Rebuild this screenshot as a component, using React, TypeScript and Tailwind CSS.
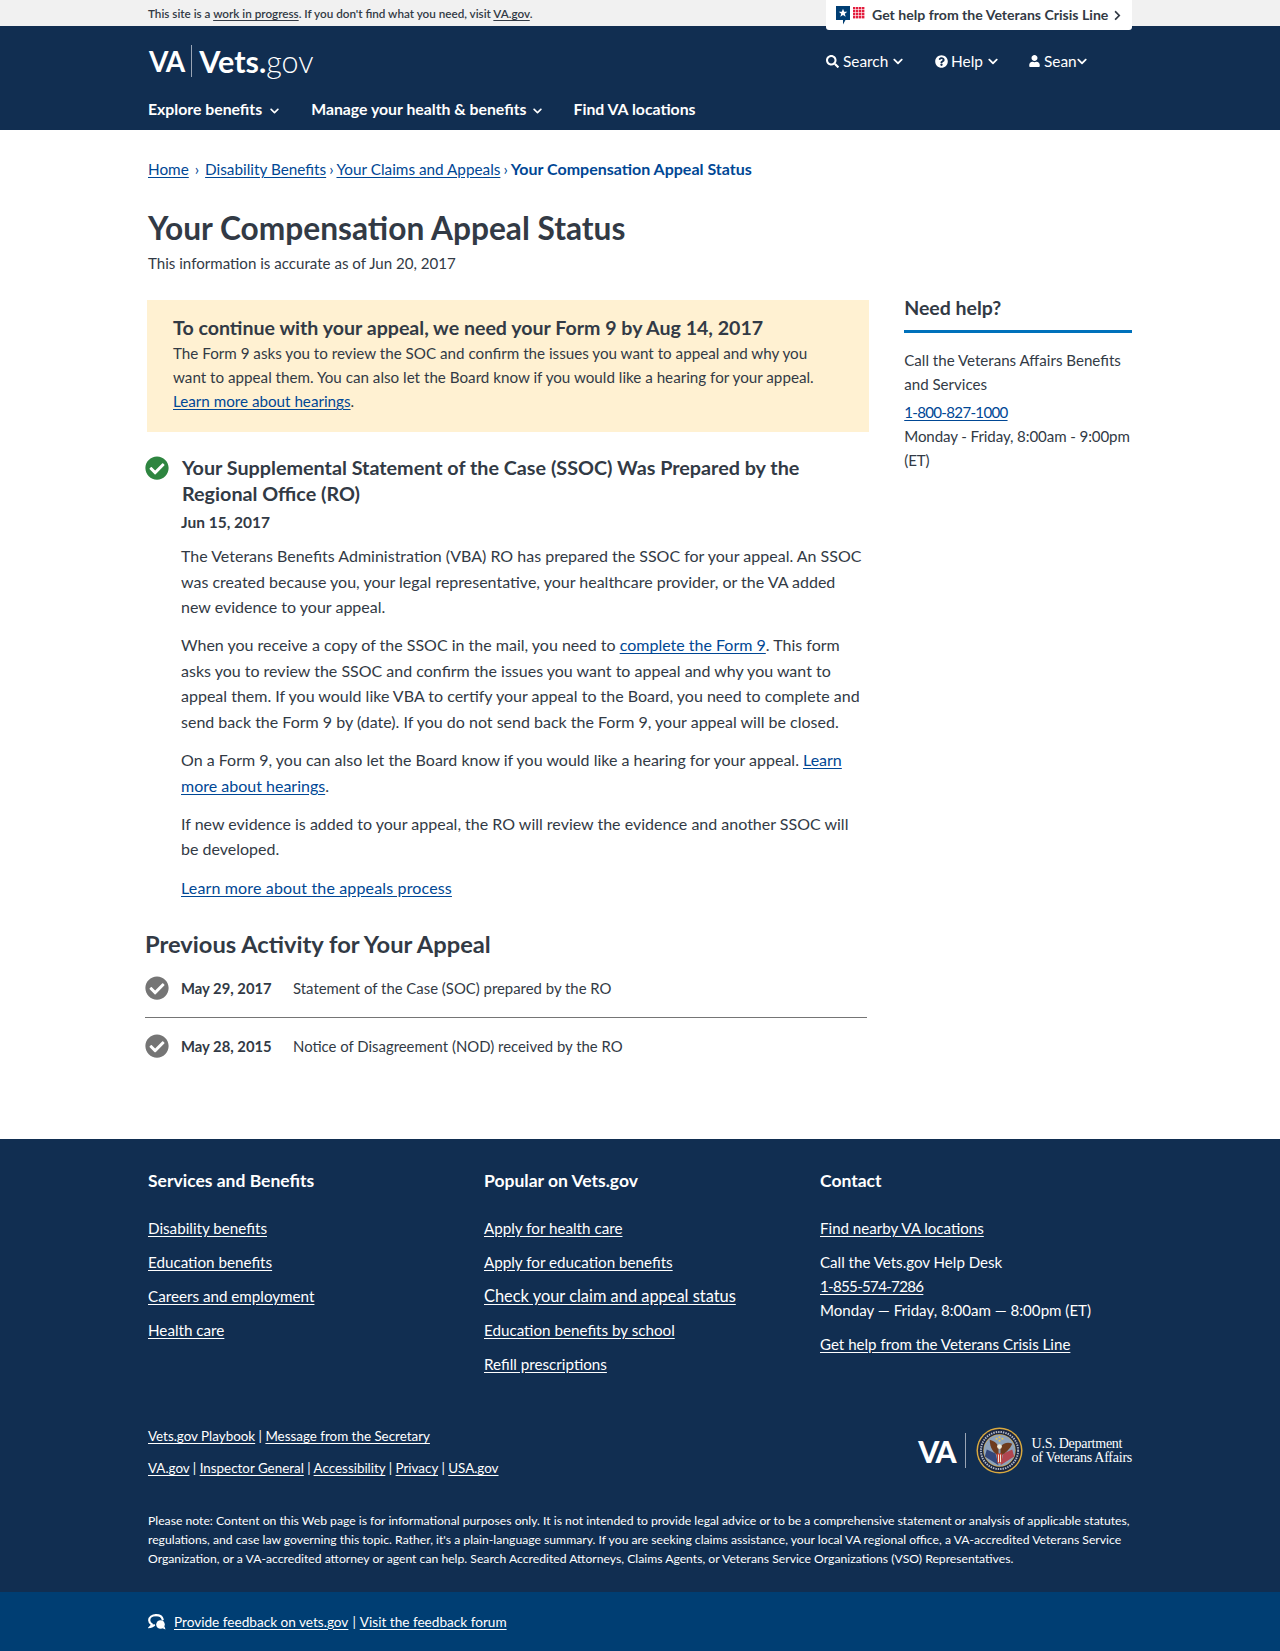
import { FaCheckCircle, FaChevronDown, FaChevronRight, FaQuestionCircle, FaSearch, FaUser } from 'react-icons/fa'

const link = 'underline underline-offset-2 text-[#004795]'
const foot = 'underline underline-offset-2 text-white'

function CrisisIcon() {
	const dots = []
	for (let y = 0; y < 4; y++) {
		for (let x = 0; x < 4; x++) {
			dots.push(<rect key={`${x}-${y}`} x={17 + x * 3} y={1 + y * 3} width="2.400" height="2.400" fill="#e31c3d" />)
		}
	}
	return (
		<svg width="29" height="19" viewBox="0 0 29 19" className="shrink-0">
			<path d="M0 0h14v14H9.5L7 18.5V14H0z" fill="#003e73" />
			<path d="M7 2.8l1.2 3h3.1L8.8 7.7l.9 3.1L7 9l-2.700 1.800.9-3.100L2.700 5.800h3.100z" fill="#fff" />
			{dots}
		</svg>
	)
}

function Seal() {
	return (
		<svg width="47" height="47" viewBox="0 0 48 48" className="shrink-0">
			<circle cx="24" cy="24" r="23.500" fill="#d9a93f" />
			<circle cx="24" cy="24" r="22" fill="#1a2540" />
			<circle cx="24" cy="24" r="19" fill="none" stroke="#aeb6c4" strokeWidth="2" strokeDasharray="1.500 1" />
			<circle cx="24" cy="24" r="16.500" fill="#d9a93f" />
			<circle cx="24" cy="24" r="16" fill="#8ea3bb" />
			<path d="M9 30 L23 39 L20 27 L11 23z" fill="#34477a" />
			<path d="M39 30 L25 39 L28 27 L37 23z" fill="#b24650" />
			<path d="M23 29 C18 27 14 21 14 13 C18 14 21 16 23 20z" fill="#6e3b1e" />
			<path d="M25 29 C30 27 35 22 37 17 C33 15 28 16 25 20z" fill="#6e3b1e" />
			<circle cx="24" cy="20" r="2.500" fill="#efe9d8" />
			<path d="M21 27h6l-1 10h-4z" fill="#c0392b" />
			<path d="M22.500 28h1v8h-1zM24.500 28h1v8h-1z" fill="#f2efe6" />
			<circle cx="21" cy="12" r="1.100" fill="#e8c24f" />
			<circle cx="24" cy="10.500" r="1.100" fill="#e8c24f" />
			<circle cx="27" cy="12" r="1.100" fill="#e8c24f" />
			<circle cx="24" cy="14" r="1.100" fill="#e8c24f" />
		</svg>
	)
}

function FeedbackIcon() {
	return (
		<svg width="18" height="16" viewBox="0 0 18 16" className="shrink-0 mr-[8px]">
			<path d="M8 1.200C4.100 1.200 1.200 3.400 1.200 6.300c0 1.700 1 3.100 2.600 4.100-.2 1-.7 1.800-1.400 2.500 1.400-.2 2.600-.8 3.600-1.700" fill="none" stroke="#fff" strokeWidth="2.200" strokeLinecap="round" />
			<path d="M8 1.200c3.500 0 6.200 1.800 6.700 4.300" fill="none" stroke="#fff" strokeWidth="2.200" strokeLinecap="round" />
			<circle cx="12.500" cy="10.500" r="4.300" fill="#fff" />
			<path d="M14 14l3.500 1.500-1-3z" fill="#fff" />
		</svg>
	)
}

function FooterColumn({ title, items }: { title: string; items: string[] }) {
	return (
		<div>
			<h3 className="text-[17.500px] font-bold leading-[24px] mb-[23px]">{title}</h3>
			<ul className="flex flex-col gap-[10px] text-[15.200px] leading-[24px]">
				{items.map((item) => (
					<li key={item}>
						<a className={item.startsWith('Check') ? `${foot} text-[16.400px]` : foot}>{item}</a>
					</li>
				))}
			</ul>
		</div>
	)
}

export default function App() {
	return (
		<div className="relative font-[Lato,sans-serif] text-[#323a45] bg-white">
			{/* top notice */}
			<div className="h-[26px] bg-[#f1f1f1]">
				<div className="relative mx-auto w-[984px] text-[11.700px] leading-[26px] font-semibold">
					This site is a <a className="underline underline-offset-2">work in progress</a>. If you don't find what you need, visit{' '}
					<a className="underline underline-offset-2">VA.gov</a>.
					<a className="absolute right-0 top-0 z-10 flex items-center w-[306px] h-[30px] pl-[10px] bg-white rounded-b-[3px] text-[14.100px] font-bold whitespace-nowrap">
						<CrisisIcon />
						<span className="ml-[7px]">Get help from the Veterans Crisis Line</span>
						<FaChevronRight className="ml-auto mr-[10px] w-[9px] h-[11px]" />
					</a>
				</div>
			</div>

			<header className="h-[104px] bg-[#112e51] text-white">
				<div className="mx-auto w-[984px]">
					<div className="flex h-[70px] items-center justify-between">
						<div className="flex items-center h-[32px] ml-[1px] text-[30.500px] leading-none">
							<span className="font-bold text-[28px] tracking-[-1px]">VA</span>
							<span className="mx-[7px] w-px h-[32px] bg-[#9aa5b5]" />
							<span className="font-bold">Vets.</span>
							<span className="font-light">gov</span>
						</div>
						<div className="flex w-[306px] items-center text-[15.400px] leading-[24px]">
							<span className="flex items-center w-[109px]">
								<FaSearch className="w-[13px] h-[13px] mr-[4px]" />
								Search
								<FaChevronDown className="w-[10px] h-[11px] ml-[5px]" />
							</span>
							<span className="flex items-center w-[94px]">
								<FaQuestionCircle className="w-[13px] h-[13px] mr-[3px]" />
								Help
								<FaChevronDown className="w-[10px] h-[11px] ml-[5px]" />
							</span>
							<span className="flex items-center">
								<FaUser className="w-[11px] h-[12px] mr-[4px]" />
								Sean
								<FaChevronDown className="w-[10px] h-[11px]" />
							</span>
						</div>
					</div>
					<nav className="flex gap-[32px] mt-[1px] text-[15.800px] font-bold leading-[24px]">
						<span className="flex items-center">
							Explore benefits
							<FaChevronDown className="w-[9px] h-[10px] ml-[8px] mt-[3px]" />
						</span>
						<span className="flex items-center">
							Manage your health &amp; benefits
							<FaChevronDown className="w-[9px] h-[10px] ml-[6px] mt-[3px]" />
						</span>
						<span>Find VA locations</span>
					</nav>
				</div>
			</header>

			<main className="mx-auto w-[984px] h-[1009px]">
				<div className="pt-[27px] text-[15.300px] leading-[24px] whitespace-nowrap">
					<a className={link}>Home</a>
					<span className="mx-[6px] text-[#004795]">›</span>
					<a className={link}>Disability Benefits</a>
					<span className="mx-[3px] text-[#004795]">›</span>
					<a className={link}>Your Claims and Appeals</a>
					<span className="mx-[3px] text-[#004795]">›</span>
					<span className="font-bold text-[16px] text-[#004795]">Your Compensation Appeal Status</span>
				</div>
				<h1 className="mt-[27px] text-[31.700px] leading-[40px] font-bold">Your Compensation Appeal Status</h1>
				<p className="mt-[3px] text-[15.100px] leading-[24px]">This information is accurate as of Jun 20, 2017</p>

				<div className="flex mt-[25px]">
					<div className="w-[723px] ml-[-1px]">
						<div className="h-[132px] bg-[#fff1d2] pl-[26px] pr-[30px] pt-[15px]">
							<h3 className="text-[19.600px] leading-[26px] font-bold whitespace-nowrap">To continue with your appeal, we need your Form 9 by Aug 14, 2017</h3>
							<p className="text-[15.200px] leading-[24px]">
								The Form 9 asks you to review the SOC and confirm the issues you want to appeal and why you want to appeal them. You can also let the Board know if you would like a hearing for your appeal.{' '}
								<a className={link}>Learn more about hearings</a>.
							</p>
						</div>

						<div className="flex mt-[23px] ml-[-2px]">
							<FaCheckCircle className="shrink-0 mt-[1px] w-[24px] h-[24px] text-[#2e8540]" />
							<div className="ml-[12px]">
								<h2 className="ml-[1px] text-[19.750px] leading-[26px] font-bold pr-[30px]">
									Your Supplemental Statement of the Case (SSOC) Was Prepared by the Regional Office (RO)
								</h2>
								<p className="mt-[3px] text-[15.500px] leading-[24px] font-bold">Jun 15, 2017</p>
								<div className="mt-[9px] pr-[6px] flex flex-col gap-[12.750px] text-[16px] leading-[25.500px]">
									<p>
										The Veterans Benefits Administration (VBA) RO has prepared the SSOC for your appeal. An SSOC was created because you, your legal representative, your healthcare provider, or the VA added new evidence to your appeal.
									</p>
									<p>
										When you receive a copy of the SSOC in the mail, you need to <a className={link}>complete the Form 9</a>. This form asks you to review the SSOC and confirm the issues you want to appeal and why you want to appeal them. If you would like VBA to certify your appeal to the Board, you need to complete and send back the Form 9 by (date). If you do not send back the Form 9, your appeal will be closed.
									</p>
									<p>
										On a Form 9, you can also let the Board know if you would like a hearing for your appeal. <a className={link}>Learn more about hearings</a>.
									</p>
									<p>If new evidence is added to your appeal, the RO will review the evidence and another SSOC will be developed.</p>
									<p>
										<a className={`${link} tracking-[0.150px]`}>Learn more about the appeals process</a>
									</p>
								</div>
							</div>
						</div>

						<h2 className="mt-[29px] ml-[-2px] text-[23.700px] leading-[30px] font-bold">Previous Activity for Your Appeal</h2>
						<div className="mt-[13px] ml-[-2px] w-[722px] flex flex-col text-[14.900px] leading-[24px]">
							<div className="flex items-center h-[31px]">
								<FaCheckCircle className="w-[24px] h-[24px] text-[#757575] mr-[12px]" />
								<span className="w-[112px] font-bold text-[14.800px]">May 29, 2017</span>
								<span>Statement of the Case (SOC) prepared by the RO</span>
							</div>
							<div className="h-px bg-[#757575] mt-[14px] mb-[12px]" />
							<div className="flex items-center h-[31px]">
								<FaCheckCircle className="w-[24px] h-[24px] text-[#757575] mr-[12px]" />
								<span className="w-[112px] font-bold text-[14.800px]">May 28, 2015</span>
								<span>Notice of Disagreement (NOD) received by the RO</span>
							</div>
						</div>
					</div>

					<aside className="ml-[35px] mt-[-5px] w-[228px]">
						<h3 className="text-[19.500px] leading-[26px] font-bold pb-[9px] border-b-[3px] border-[#0071bb]">Need help?</h3>
						<p className="mt-[15px] text-[15.100px] leading-[24px]">Call the Veterans Affairs Benefits and Services</p>
						<p className="mt-[4px] text-[15.100px] leading-[24px] tracking-[-0.100px]">
							<a className={`${link} tracking-[-0.700px]`}>1-800-827-1000</a>
							<br />
							Monday - Friday, 8:00am - 9:00pm (ET)
						</p>
					</aside>
				</div>
			</main>

			<footer className="h-[453px] bg-[#112e51] text-white">
				<div className="mx-auto w-[984px] pt-[30px]">
					<div className="grid grid-cols-[336px_336px_1fr] h-[257px]">
						<FooterColumn title="Services and Benefits" items={['Disability benefits', 'Education benefits', 'Careers and employment', 'Health care']} />
						<FooterColumn title="Popular on Vets.gov" items={['Apply for health care', 'Apply for education benefits', 'Check your claim and appeal status', 'Education benefits by school', 'Refill prescriptions']} />
						<div>
							<h3 className="text-[17.500px] font-bold leading-[24px] mb-[23px]">Contact</h3>
							<div className="text-[15.100px] leading-[24px]">
								<a className={foot}>Find nearby VA locations</a>
								<p className="mt-[10px]">Call the Vets.gov Help Desk</p>
								<a className={`${foot} tracking-[-0.700px]`}>1-855-574-7286</a>
								<p>Monday — Friday, 8:00am — 8:00pm (ET)</p>
								<a className={`${foot} block mt-[10px]`}>Get help from the Veterans Crisis Line</a>
							</div>
						</div>
					</div>

					<div className="flex justify-between items-start">
						<div className="text-[13.400px] leading-[20px]">
							<p>
								<a className={foot}>Vets.gov Playbook</a> | <a className={foot}>Message from the Secretary</a>
							</p>
							<p className="mt-[12px]">
								<a className={foot}>VA.gov</a> | <a className={foot}>Inspector General</a> | <a className={foot}>Accessibility</a> | <a className={foot}>Privacy</a> | <a className={foot}>USA.gov</a>
							</p>
						</div>
						<div className="flex items-center mt-[1px]">
							<span className="text-[30px] font-black leading-none tracking-[-2px]">VA</span>
							<span className="mx-[10px] w-px h-[35px] bg-[#9aa5b5]" />
							<Seal />
							<span className="ml-[9px] font-['Liberation_Serif',serif] text-[14px] leading-[14px] tracking-[-0.250px] whitespace-nowrap">
								U.S. Department
								<br />
								of Veterans Affairs
							</span>
						</div>
					</div>

					<p className="mt-[33px] text-[12.200px] leading-[19px]">
						Please note: Content on this Web page is for informational purposes only. It is not intended to provide legal advice or to be a comprehensive statement or analysis of applicable statutes, regulations, and case law governing this topic. Rather, it's a plain-language summary. If you are seeking claims assistance, your local VA regional office, a VA-accredited Veterans Service Organization, or a VA-accredited attorney or agent can help. Search Accredited Attorneys, Claims Agents, or Veterans Service Organizations (VSO) Representatives.
					</p>
				</div>
			</footer>

			<div className="h-[59px] pt-[1px] bg-[#003e73] text-white">
				<div className="mx-auto w-[984px] flex items-center h-full text-[13.600px]">
					<FeedbackIcon />
					<a className={foot}>Provide feedback on vets.gov</a>
					<span className="mx-[4px]">|</span>
					<a className={foot}>Visit the feedback forum</a>
				</div>
			</div>
		</div>
	)
}
